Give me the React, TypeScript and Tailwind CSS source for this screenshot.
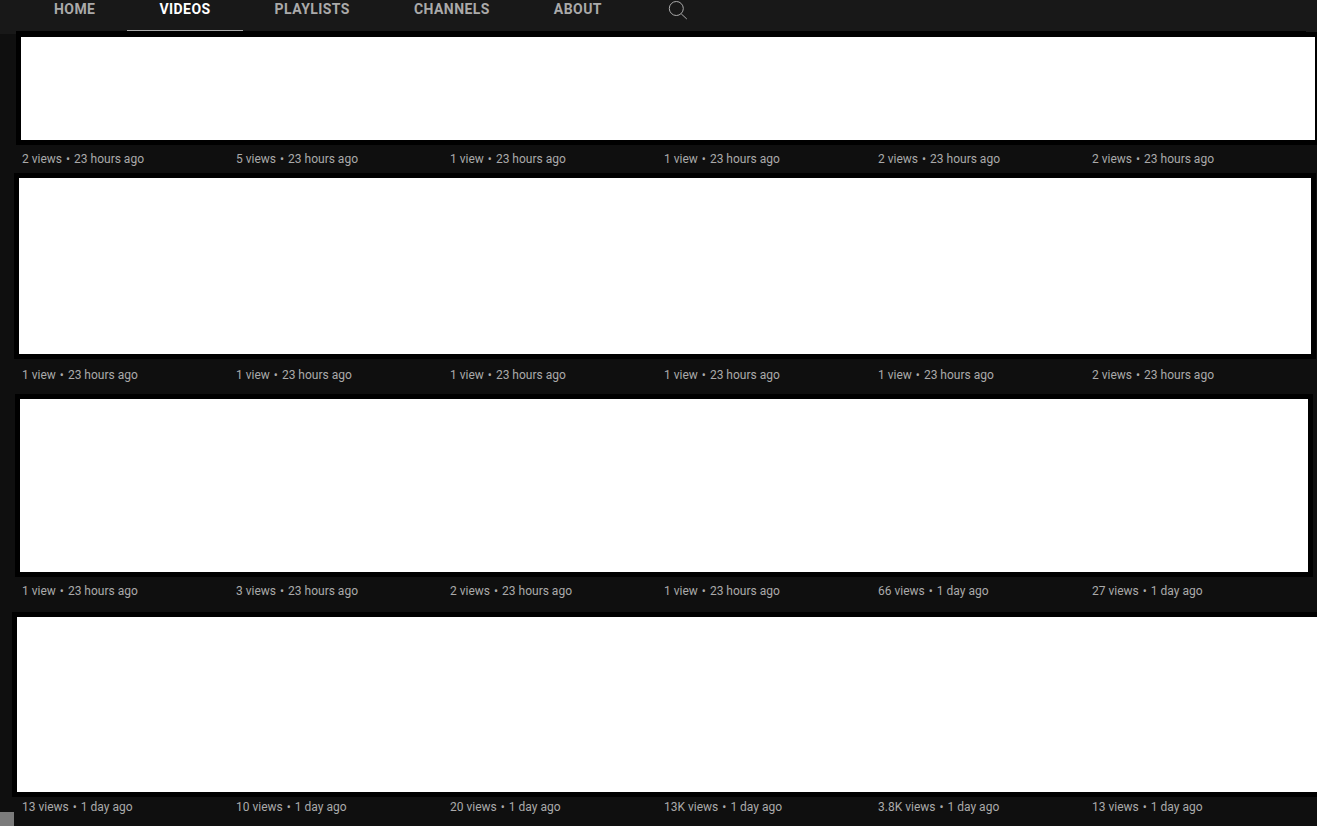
const rows = [
  {
    box: 'ml-4 pt-1.5 pb-[5px] pl-[5px] pr-0.5',
    white: 'h-[103px]',
    caption: 'h-7 pt-[5px]',
    items: ['2 views|23 hours ago', '5 views|23 hours ago', '1 view|23 hours ago', '1 view|23 hours ago', '2 views|23 hours ago', '2 views|23 hours ago'],
  },
  {
    box: 'ml-3.5 mr-px py-[5px] pl-[5px] pr-[5px]',
    white: 'h-[176px]',
    caption: 'h-[35px] pt-[7px]',
    items: ['1 view|23 hours ago', '1 view|23 hours ago', '1 view|23 hours ago', '1 view|23 hours ago', '1 view|23 hours ago', '2 views|23 hours ago'],
  },
  {
    box: 'ml-[15px] mr-1 py-[5px] pl-[5px] pr-[5px]',
    white: 'h-[173px]',
    caption: 'h-[35px] pt-[5px]',
    items: ['1 view|23 hours ago', '3 views|23 hours ago', '2 views|23 hours ago', '1 view|23 hours ago', '66 views|1 day ago', '27 views|1 day ago'],
  },
  {
    box: 'ml-3 py-[5px] pl-[5px]',
    white: 'h-[175px]',
    caption: 'h-[29px] pt-px',
    items: ['13 views|1 day ago', '10 views|1 day ago', '20 views|1 day ago', '13K views|1 day ago', '3.8K views|1 day ago', '13 views|1 day ago'],
  },
];

const tabs = ['Home', 'Videos', 'Playlists', 'Channels', 'About'];

export default function App() {
  return (
    <div className="relative h-[826px] w-[1317px] overflow-hidden bg-[#0f0f0f] font-['Roboto',sans-serif]">
      <div className="flex h-[31px] items-start bg-[#181818] pl-[22px]">
        {tabs.map((tab) => (
          <div
            key={tab}
            className={
              tab === 'Videos'
                ? 'h-[31px] border-b border-[#aaaaaa] px-8 pt-[1px] text-sm leading-4 font-bold tracking-[0.44px] text-white uppercase'
                : 'h-[31px] px-8 pt-[1px] text-sm leading-4 font-bold tracking-[0.44px] text-[#aaaaaa] uppercase'
            }
          >
            {tab}
          </div>
        ))}
        <svg className="ml-[34px] h-5 w-5" viewBox="0 0 20 20" fill="none" stroke="#aaaaaa" strokeWidth="1">
          <circle cx="8.3" cy="8.5" r="7" />
          <path d="M13.2 13.8 18.8 19" />
        </svg>
      </div>

      {rows.map((row, i) => (
        <div key={i}>
          <div className={`bg-black ${row.box}`}>
            <div className={`bg-white ${row.white}`} />
          </div>
          <div className={`grid grid-cols-[repeat(6,214px)] content-start pl-[22px] ${row.caption}`}>
            {row.items.map((item, j) => {
              const [views, age] = item.split('|');
              return (
                <div key={j} className="text-xs leading-[18px] whitespace-nowrap text-[#aaaaaa]">
                  {views}
                  <span className="mx-1">•</span>
                  {age}
                </div>
              );
            })}
          </div>
        </div>
      ))}

      {/* header bleeding past the black frame on both sides */}
      <div className="absolute top-[31px] left-0 h-[3px] w-4 bg-[#181818]" />
      <div className="absolute top-[31px] right-0 h-px w-[11px] bg-[#181818]" />
      {/* scrollbar corner peeking in at the bottom left */}
      <div className="absolute bottom-0 left-0 h-3.5 w-3.5 bg-[#7b7b7b]" />
    </div>
  );
}
